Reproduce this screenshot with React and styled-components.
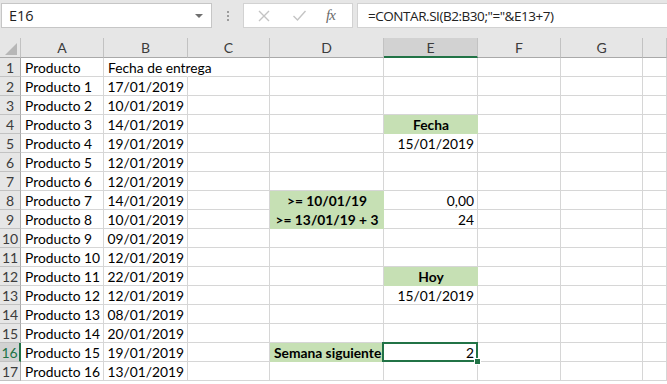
import React from 'react';
import styled, { createGlobalStyle } from 'styled-components';

const GlobalStyle = createGlobalStyle`
  html, body { margin: 0; padding: 0; background: #e6e6e6; overflow: hidden; }
  #root { width: 667px; height: 384px; overflow: hidden; }
`;

const COLS = [
    { key: 'A', w: 83 },
    { key: 'B', w: 84 },
    { key: 'C', w: 82 },
    { key: 'D', w: 114 },
    { key: 'E', w: 94 },
    { key: 'F', w: 83 },
    { key: 'G', w: 82 },
];

const dates = ['17/01/2019', '10/01/2019', '14/01/2019', '19/01/2019', '12/01/2019', '12/01/2019', '14/01/2019', '10/01/2019', '09/01/2019', '12/01/2019', '22/01/2019', '12/01/2019', '08/01/2019', '20/01/2019', '19/01/2019', '13/01/2019'];

// extra cells in D / E, keyed by row number
const extras = {
    4: { E: { text: 'Fecha', bold: true, fill: true, align: 'center' } },
    5: { E: { text: '15/01/2019', align: 'right' } },
    8: {
        D: { text: '>= 10/01/19', bold: true, fill: true, align: 'center' },
        E: { text: '0,00', align: 'right' },
    },
    9: {
        D: { text: '>= 13/01/19 + 3', bold: true, fill: true, align: 'center' },
        E: { text: '24', align: 'right' },
    },
    12: { E: { text: 'Hoy', bold: true, fill: true, align: 'center' } },
    13: { E: { text: '15/01/2019', align: 'right' } },
    16: {
        D: { text: 'Semana siguiente', bold: true, fill: true, align: 'left' },
        E: { text: '2', align: 'right', selected: true },
    },
};

const buildRows = () => {
    const rows = [];
    rows.push({ n: 1, A: { text: 'Producto' }, B: { text: 'Fecha de entrega', spill: true } });
    dates.forEach((d, i) => {
        const n = i + 2;
        rows.push({
            n,
            A: { text: `Producto ${i + 1}` },
            B: { text: d, align: 'right' },
            ...(extras[n] || {}),
        });
    });
    return rows;
};

const App = () => {
    const rows = buildRows();
    return (<Wrapper>
        <GlobalStyle />
        <FormulaBar>
            <NameBox>
                <span>E16</span>
                <DropArrow />
            </NameBox>
            <Grip><i /><i /><i /></Grip>
            <FnBox>
                <svg width="14" height="14" viewBox="0 0 14 14">
                    <path d="M2 2 L12 12 M12 2 L2 12" stroke="#c4c4c4" strokeWidth="1.4" fill="none" />
                </svg>
                <svg width="15" height="13" viewBox="0 0 15 13">
                    <path d="M1.5 7 L5.5 11 L13.5 2" stroke="#c4c4c4" strokeWidth="1.4" fill="none" />
                </svg>
                <Fx>fx</Fx>
            </FnBox>
            <FormulaInput>=CONTAR.SI(B2:B30;"="&amp;E13+7)</FormulaInput>
        </FormulaBar>

        <Sheet>
            <HeaderRow>
                <Corner><Tri /></Corner>
                {COLS.map((c) => (
                    <ColHead key={c.key} $w={c.w} $active={c.key === 'E'}>{c.key}</ColHead>
                ))}
                <ColHead $grow />
            </HeaderRow>
            {rows.map((r) => (
                <Row key={r.n}>
                    <RowHead $active={r.n === 16}>{r.n}</RowHead>
                    {COLS.map((c) => {
                        const cell = r[c.key] || {};
                        return (
                            <Cell
                                key={c.key}
                                $w={c.w}
                                $align={cell.align}
                                $bold={cell.bold}
                                $fill={cell.fill}
                                $spill={cell.spill}
                                $selected={cell.selected}
                            >
                                {cell.text}
                                {cell.selected && <Handle />}
                            </Cell>
                        );
                    })}
                    <Cell $grow />
                </Row>
            ))}
        </Sheet>
    </Wrapper>);
};

const Wrapper = styled.main`
display: flex;
flex-direction: column;
width: 667px;
height: 384px;
background: #e6e6e6;
font-family: "Lato", "Liberation Sans", sans-serif;
`;

const FormulaBar = styled.div`
display: flex;
align-items: center;
height: 25px;
padding: 3px 0 0 1px;
margin-bottom: 10px;
`;

const NameBox = styled.div`
box-sizing: border-box;
width: 211px;
height: 25px;
background: #fff;
border: 1px solid #c6c6c6;
display: flex;
align-items: center;
justify-content: space-between;
padding: 0 8px 0 7px;
font-family: "Open Sans", "Noto Sans", sans-serif;
font-size: 14.5px;
color: #222;
`;

const DropArrow = styled.span`
width: 0;
height: 0;
border-left: 4px solid transparent;
border-right: 4px solid transparent;
border-top: 4px solid #6f6f6f;
margin-top: 1px;
`;

const Grip = styled.div`
width: 31px;
display: flex;
flex-direction: column;
align-items: center;
gap: 2px;

& i {
  display: block;
  width: 2px;
  height: 2px;
  background: #9c9c9c;
}
`;

const FnBox = styled.div`
box-sizing: border-box;
width: 110px;
height: 25px;
background: #fff;
border: 1px solid #d2d2d2;
display: flex;
align-items: center;
padding-left: 13px;
gap: 21px;
`;

const Fx = styled.span`
font-family: "Liberation Serif", "DejaVu Serif", serif;
font-style: italic;
font-size: 15px;
color: #6a6a6a;
letter-spacing: -1px;
margin-left: -2px;
`;

const FormulaInput = styled.div`
box-sizing: border-box;
flex: 1;
height: 25px;
margin-left: 4px;
background: #fff;
border: 1px solid #d2d2d2;
border-right: none;
display: flex;
align-items: center;
padding-left: 10px;
font-family: "Open Sans", "Noto Sans", sans-serif;
font-size: 13.5px;
letter-spacing: -0.45px;
color: #222;
white-space: nowrap;
`;

const Sheet = styled.div`
display: flex;
flex-direction: column;
background: #fff;
flex: 1;
overflow: hidden;
`;

const HeaderRow = styled.div`
display: flex;
height: 20px;
background: #e6e6e6;
`;

const Corner = styled.div`
box-sizing: border-box;
position: relative;
width: 21px;
height: 20px;
border-right: 1px solid #c2c2c2;
border-bottom: 1px solid #a9a9a9;
`;

const Tri = styled.span`
position: absolute;
right: 3px;
bottom: 2px;
width: 0;
height: 0;
border-left: 12px solid transparent;
border-bottom: 12px solid #b7b7b7;
`;

const ColHead = styled.div`
box-sizing: border-box;
width: ${(p) => (p.$grow ? 'auto' : `${p.$w}px`)};
flex: ${(p) => (p.$grow ? 1 : 'none')};
height: 20px;
display: flex;
align-items: center;
justify-content: center;
font-size: 14px;
color: #3c3c3c;
background: ${(p) => (p.$active ? '#d2d2d2' : '#e6e6e6')};
border-right: 1px solid #c2c2c2;
border-bottom: ${(p) => (p.$active ? '2px solid #217346' : '1px solid #a9a9a9')};
`;

const Row = styled.div`
display: flex;
height: 19px;
`;

const RowHead = styled.div`
box-sizing: border-box;
width: 21px;
height: 19px;
display: flex;
align-items: flex-end;
justify-content: center;
padding-bottom: 1px;
font-size: 14px;
line-height: 1;
background: ${(p) => (p.$active ? '#d2d2d2' : '#e6e6e6')};
color: ${(p) => (p.$active ? '#217346' : '#3c3c3c')};
border-bottom: 1px solid #c2c2c2;
border-right: ${(p) => (p.$active ? '2px solid #217346' : '1px solid #a9a9a9')};
`;

const Cell = styled.div`
box-sizing: border-box;
position: relative;
width: ${(p) => (p.$grow ? 'auto' : `${p.$w}px`)};
flex: ${(p) => (p.$grow ? 1 : 'none')};
height: 19px;
display: flex;
align-items: flex-end;
justify-content: ${(p) => (p.$align === 'right' ? 'flex-end' : p.$align === 'center' ? 'center' : 'flex-start')};
padding: 0 3px 1px 4px;
font-size: 13.8px;
line-height: 1;
color: #000;
white-space: nowrap;
font-weight: ${(p) => (p.$bold ? 700 : 400)};
background: ${(p) => (p.$fill ? '#c6e0b4' : 'transparent')};
border-right: 1px solid ${(p) => (p.$fill || p.$spill ? 'transparent' : '#d6d6d6')};
border-bottom: 1px solid ${(p) => (p.$fill ? '#c6e0b4' : '#d6d6d6')};
overflow: visible;
z-index: ${(p) => (p.$spill ? 1 : 'auto')};

${(p) => p.$selected && `
  &::after {
    content: '';
    position: absolute;
    left: -2px;
    top: -1px;
    right: -1px;
    bottom: -1px;
    border: 2px solid #217346;
    pointer-events: none;
  }
`}
`;

const Handle = styled.span`
position: absolute;
right: -4px;
bottom: -4px;
width: 5px;
height: 5px;
background: #217346;
border: 1px solid #fff;
z-index: 2;
`;

export default App;
